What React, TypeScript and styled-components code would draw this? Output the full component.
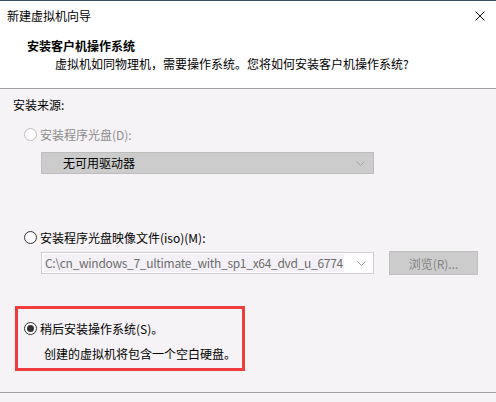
import React from 'react';
import styled, { createGlobalStyle } from 'styled-components';

const GlobalStyle = createGlobalStyle`
  html, body {
    margin: 0;
    padding: 0;
    background: #f6f3f6;
  }
  body {
    font-family: "Noto Sans CJK SC", "Noto Sans", sans-serif;
    font-size: 12px;
    color: #000;
  }
`;

const Window = styled.div`
  width: 496px;
  height: 402px;
  overflow: hidden;
  box-sizing: border-box;
  border-top: 1px solid #3b5468;
  background: #f6f3f6;
`;

const TitleBar = styled.div`
  height: 29px;
  background: #fff;
  display: flex;
  align-items: center;
  justify-content: space-between;
  padding: 0 11px 0 7px;
`;

const TitleText = styled.span`
  font-size: 12px;
  line-height: 18px;
`;

const CloseIcon = styled.svg`
  display: block;
  width: 10px;
  height: 10px;
`;

const Header = styled.div`
  background: #fff;
  padding: 7px 0 15px 27px;
  border-bottom: 1px solid #a0a0a0;
`;

const HeaderTitle = styled.div`
  font-weight: bold;
  line-height: 18px;
`;

const HeaderSub = styled.div`
  line-height: 18px;
  padding-left: 28px;
`;

const Body = styled.div`
  padding: 7px 0 0 0;
  height: 304px;
  box-sizing: border-box;
  border-bottom: 1px solid #a0a0a0;
`;

const SectionLabel = styled.div`
  line-height: 18px;
  padding-left: 13px;
`;

const RadioRow = styled.label<{ $disabled?: boolean; $top: number }>`
  display: flex;
  align-items: center;
  gap: 3px;
  height: 18px;
  margin: ${p => p.$top}px 0 0 24px;
  color: ${p => (p.$disabled ? '#8c8c8c' : '#000')};
`;

const RadioCircle = styled.span<{ $disabled?: boolean; $checked?: boolean }>`
  width: 13px;
  height: 13px;
  box-sizing: border-box;
  border-radius: 50%;
  border: 1px solid ${p => (p.$disabled ? '#bcbcbc' : '#333')};
  background: #fff;
  display: flex;
  align-items: center;
  justify-content: center;
  &::after {
    content: '';
    display: ${p => (p.$checked ? 'block' : 'none')};
    width: 7px;
    height: 7px;
    border-radius: 50%;
    background: #333;
  }
`;

const DisabledSelect = styled.div`
  margin: 9px 0 0 41px;
  width: 333px;
  height: 22px;
  box-sizing: border-box;
  border: 1px solid #bdbdbd;
  background: #cccccc;
  display: flex;
  align-items: center;
  justify-content: space-between;
  padding: 0 8px 0 21px;
  line-height: 18px;
`;

const Chevron = styled.svg`
  display: block;
  flex-shrink: 0;
  width: 9px;
  height: 5px;
`;

const IsoRow = styled.div`
  display: flex;
  align-items: center;
  gap: 15px;
  margin: 5px 0 0 41px;
  height: 24px;
`;

const Combo = styled.div`
  width: 333px;
  height: 22px;
  box-sizing: border-box;
  border: 1px solid #cfcfcf;
  background: #fff;
  display: flex;
  align-items: center;
  justify-content: space-between;
  padding: 0 7px 0 2px;
`;

const ComboText = styled.span`
  color: #6d6d6d;
  background: #f3f1f6;
  line-height: 18px;
  padding: 0 1px;
  letter-spacing: -0.3px;
  white-space: nowrap;
  overflow: hidden;
  max-width: 312px;
`;

const BrowseButton = styled.button`
  width: 89px;
  height: 24px;
  box-sizing: border-box;
  border: 1px solid #bfbfbf;
  background: #cccccc;
  color: #838383;
  font: inherit;
  font-size: 12px;
  padding: 0;
`;

const Highlight = styled.div`
  margin: 31px 0 0 15px;
  width: 230px;
  height: 65px;
  box-sizing: border-box;
  border: 3px solid #f03c3c;
  padding: 10px 0 0 6px;
`;

const HighlightRow = styled(RadioRow)`
  margin-left: 0;
`;

const Note = styled.div`
  line-height: 18px;
  margin-top: 8px;
  padding-left: 20px;
`;

const ChevronDown = () => (
  <Chevron viewBox="0 0 9 5">
    <path d="M0.5 0.5 L4.5 4.5 L8.5 0.5" fill="none" stroke="#a6a6a6" strokeWidth="1" />
  </Chevron>
);

export default function App() {
  return (
    <Window>
      <GlobalStyle />
      <TitleBar>
        <TitleText>新建虚拟机向导</TitleText>
        <CloseIcon viewBox="0 0 10 10">
          <path d="M0.5 0.5 L9.5 9.5 M9.5 0.5 L0.5 9.5" stroke="#111" strokeWidth="1" fill="none" />
        </CloseIcon>
      </TitleBar>
      <Header>
        <HeaderTitle>安装客户机操作系统</HeaderTitle>
        <HeaderSub>虚拟机如同物理机，需要操作系统。您将如何安装客户机操作系统?</HeaderSub>
      </Header>
      <Body>
        <SectionLabel>安装来源:</SectionLabel>
        <RadioRow $disabled $top={11}>
          <RadioCircle $disabled />
          <span>安装程序光盘(D):</span>
        </RadioRow>
        <DisabledSelect>
          <span>无可用驱动器</span>
          <ChevronDown />
        </DisabledSelect>
        <RadioRow $top={54}>
          <RadioCircle />
          <span>安装程序光盘映像文件(iso)(M):</span>
        </RadioRow>
        <IsoRow>
          <Combo>
            <ComboText>C:\cn_windows_7_ultimate_with_sp1_x64_dvd_u_6774</ComboText>
            <ChevronDown />
          </Combo>
          <BrowseButton disabled>浏览(R)...</BrowseButton>
        </IsoRow>
        <Highlight>
          <HighlightRow $top={0}>
            <RadioCircle $checked />
            <span>稍后安装操作系统(S)。</span>
          </HighlightRow>
          <Note>创建的虚拟机将包含一个空白硬盘。</Note>
        </Highlight>
      </Body>
    </Window>
  );
}
